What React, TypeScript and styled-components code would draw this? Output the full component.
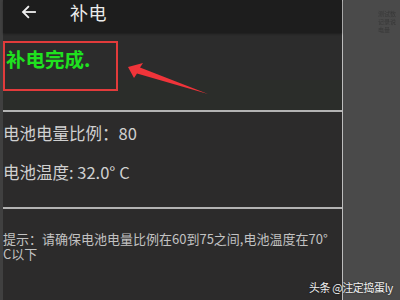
import React from "react";
import styled, { createGlobalStyle } from "styled-components";

const Global = createGlobalStyle`
  html, body { margin: 0; padding: 0; background: #4a4a4a; }
  body { font-family: "Noto Sans CJK SC", "Noto Sans", sans-serif; }
  #root { width: 400px; height: 300px; overflow: hidden; }
`;

const Root = styled.div`
  position: relative;
  display: flex;
  width: 400px;
  height: 300px;
  background: #4a4a4a;
  overflow: hidden;
`;

const LeftStrip = styled.div`
  width: 3px;
  flex: none;
  background: #404040;
`;

const Phone = styled.div`
  width: 339px;
  flex: none;
  display: flex;
  flex-direction: column;
  background: #2c2b2b;
`;

const VLine = styled.div`
  width: 1px;
  flex: none;
  background: #bdbdbd;
`;

const RightPanel = styled.div`
  flex: 1;
  min-width: 0;
  background: #4a4a4a;
  padding: 10px 0 0 35px;
  display: flex;
  flex-direction: column;
  gap: 1px;
`;

const Smudge = styled.div`
  font-size: 6px;
  line-height: 7px;
  color: #383838;
  white-space: nowrap;
  filter: blur(0.6px);
`;

const TopBar = styled.div`
  height: 33px;
  flex: none;
  background: #1d1d1d;
  display: flex;
  align-items: center;
  box-shadow: 0 1px 2px rgba(0, 0, 0, 0.35);
  position: relative;
  z-index: 1;
`;

const BackIcon = styled.svg`
  margin-left: 17px;
  width: 18px;
  height: 18px;
  margin-top: -10px;
`;

const Title = styled.div`
  margin-left: 32px;
  margin-top: -10px;
  font-size: 18px;
  color: #ececec;
  letter-spacing: 0.5px;
`;

const ResultSection = styled.div`
  height: 77px;
  flex: none;
  padding-top: 8px;
  box-sizing: border-box;
  background: linear-gradient(#2c2c2c 0, #2c2c2c 47px, #2b2d2a 47px);
`;

const ResultBox = styled.div`
  width: 115px;
  height: 50px;
  box-sizing: border-box;
  border: 2px solid #e23b3b;
  padding: 4px 0 0 1px;
`;

const ResultText = styled.div`
  font-size: 19.5px;
  line-height: 24px;
  font-weight: 700;
  color: #1fe21f;
  white-space: nowrap;
`;

const Divider = styled.div`
  height: 2px;
  flex: none;
  background: #b3b3b3;
`;

const InfoSection = styled.div`
  padding: 2px 0 15px 0;
  display: flex;
  flex-direction: column;
`;

const InfoRow = styled.div`
  height: 39px;
  line-height: 39px;
  font-size: 16.5px;
  color: #d0d0d0;
  white-space: nowrap;
`;

const Hint = styled.div`
  padding: 22px 9px 0 0;
  font-size: 13px;
  line-height: 15px;
  color: #c2c2c2;
`;

const ArrowOverlay = styled.svg`
  position: absolute;
  left: 0;
  top: 0;
  width: 400px;
  height: 300px;
  pointer-events: none;
`;

const Watermark = styled.div`
  position: absolute;
  left: 309px;
  top: 280px;
  font-size: 11px;
  line-height: 15px;
  letter-spacing: -0.4px;
  color: #f2f2f2;
  white-space: nowrap;
  text-shadow: 0 0 2px rgba(0, 0, 0, 0.6);
`;

export default function App() {
  return (
    <>
      <Global />
      <Root>
        <LeftStrip />
        <Phone>
          <TopBar>
            <BackIcon viewBox="0 0 24 24" fill="none" stroke="#f0f0f0" strokeWidth="2.4" strokeLinecap="square">
              <path d="M20 12H5" />
              <path d="M11 5l-7 7 7 7" />
            </BackIcon>
            <Title>补电</Title>
          </TopBar>
          <ResultSection>
            <ResultBox>
              <ResultText>补电完成.</ResultText>
            </ResultBox>
          </ResultSection>
          <Divider />
          <InfoSection>
            <InfoRow>电池电量比例：80</InfoRow>
            <InfoRow>电池温度: 32.0° C</InfoRow>
          </InfoSection>
          <Divider />
          <Hint>
            提示：请确保电池电量比例在60到75之间,电池温度在70°<wbr />C以下
          </Hint>
        </Phone>
        <VLine />
        <RightPanel>
          <Smudge>测试数</Smudge>
          <Smudge>记录说</Smudge>
          <Smudge>电量</Smudge>
        </RightPanel>
        <ArrowOverlay viewBox="0 0 400 300">
          <polygon points="128,67 143,63 140,67.5 208,94 137,73.5 134,78" fill="#f0343a" />
        </ArrowOverlay>
        <Watermark>头条 @注定捣蛋ly</Watermark>
      </Root>
    </>
  );
}
